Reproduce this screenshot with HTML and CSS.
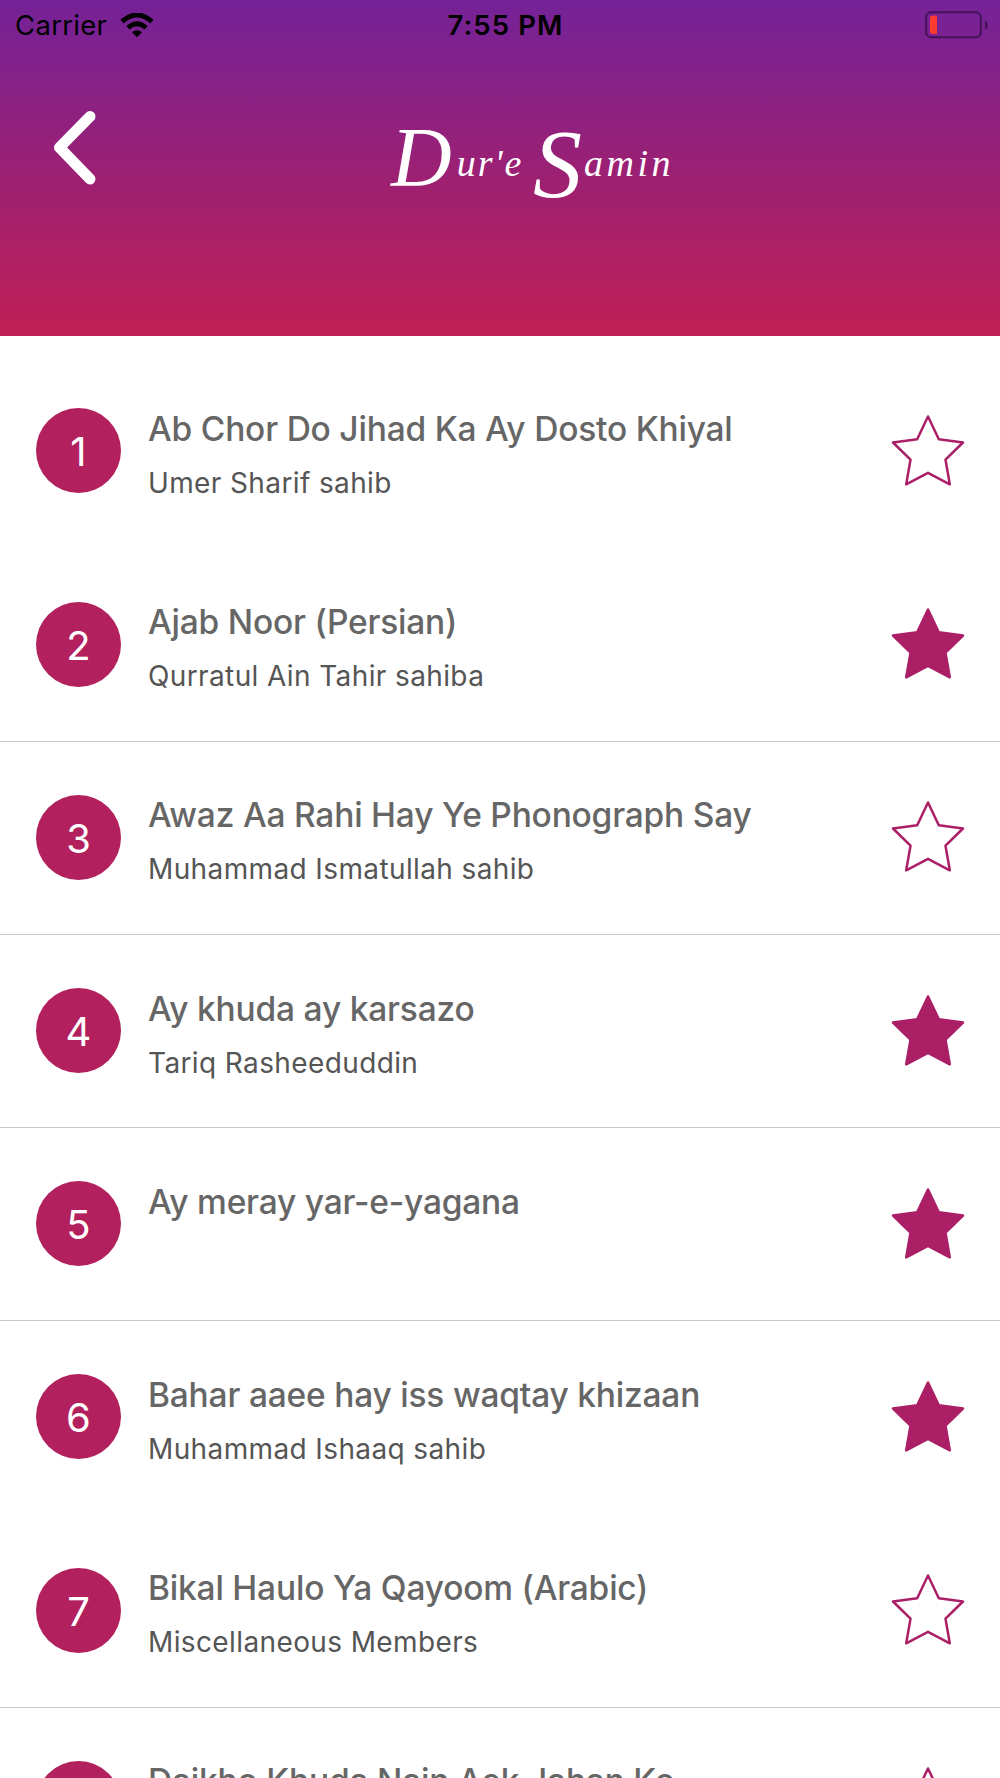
FILE: index.html
```html
<!DOCTYPE html>
<html lang="en">
<head>
    <meta charset="UTF-8">
    <meta name="viewport" content="width=device-width, initial-scale=1.0">
    <title>Dur'e Samin</title>
    <link rel="stylesheet" href="styles.css">
</head>
<body>
    <svg class="symbols" width="0" height="0">
        <symbol id="star" viewBox="0 0 72 70" overflow="visible">
            <path d="M36 1.5 L46.8 24.2 L71 27.5 L53.5 44.7 L57.8 69.3 L36 57.8 L14.2 69.3 L18.5 44.7 L1 27.5 L25.2 24.2 Z"/>
        </symbol>
    </svg>

    <header class="header">
        <div class="status-bar">
            <div class="status-left">
                <span class="carrier">Carrier</span>
                <svg class="wifi" width="34" height="25" viewBox="0 0 34 25">
                    <path d="M2 8.5 Q17 -4.5 32 8.5" stroke-width="5"/>
                    <path d="M7.9 14.8 Q17 6.7 26.1 14.8" stroke-width="4.8"/>
                    <path class="wifi-dot" d="M12 19.2 Q17 15.2 22 19.2 L17 24.2 Z"/>
                </svg>
            </div>
            <span class="time">7:55 PM</span>
            <svg class="battery" width="63" height="28" viewBox="0 0 63 28">
                <rect class="battery-body" x="1.2" y="1.2" width="54.6" height="25" rx="5"/>
                <path class="battery-tip" d="M60 9 Q63 11 63 14 Q63 17 60 19 Z"/>
                <path class="battery-level" d="M8 4.5 H12 V23 H8 Q5 23 5 20 V7.5 Q5 4.5 8 4.5 Z"/>
            </svg>
        </div>
        <div class="nav-bar">
            <svg class="back" width="44" height="76" viewBox="0 0 44 76">
                <path d="M37 6.5 L6.5 37.5 L37 69"/>
            </svg>
            <h1 class="title"><span class="initial-d">D</span><span class="first">ur'e</span> <span class="initial-s">S</span><span class="last">amin</span></h1>
        </div>
    </header>

    <main class="list">
        <div class="row no-line">
            <div class="number">1</div>
            <div class="info">
                <h2>Ab Chor Do Jihad Ka Ay Dosto Khiyal</h2>
                <p>Umer Sharif sahib</p>
            </div>
            <svg class="star"><use href="#star"/></svg>
        </div>
        <div class="row">
            <div class="number">2</div>
            <div class="info">
                <h2>Ajab Noor (Persian)</h2>
                <p>Qurratul Ain Tahir sahiba</p>
            </div>
            <svg class="star filled"><use href="#star"/></svg>
        </div>
        <div class="row">
            <div class="number">3</div>
            <div class="info">
                <h2>Awaz Aa Rahi Hay Ye Phonograph Say</h2>
                <p>Muhammad Ismatullah sahib</p>
            </div>
            <svg class="star"><use href="#star"/></svg>
        </div>
        <div class="row">
            <div class="number">4</div>
            <div class="info">
                <h2>Ay khuda ay karsazo</h2>
                <p>Tariq Rasheeduddin</p>
            </div>
            <svg class="star filled"><use href="#star"/></svg>
        </div>
        <div class="row">
            <div class="number">5</div>
            <div class="info">
                <h2>Ay meray yar-e-yagana</h2>
                <p></p>
            </div>
            <svg class="star filled"><use href="#star"/></svg>
        </div>
        <div class="row no-line">
            <div class="number">6</div>
            <div class="info">
                <h2>Bahar aaee hay iss waqtay khizaan</h2>
                <p>Muhammad Ishaaq sahib</p>
            </div>
            <svg class="star filled"><use href="#star"/></svg>
        </div>
        <div class="row">
            <div class="number">7</div>
            <div class="info">
                <h2>Bikal Haulo Ya Qayoom (Arabic)</h2>
                <p>Miscellaneous Members</p>
            </div>
            <svg class="star"><use href="#star"/></svg>
        </div>
        <div class="row">
            <div class="number">8</div>
            <div class="info">
                <h2>Daikho Khuda Nain Aek Jahan Ko</h2>
                <p></p>
            </div>
            <svg class="star"><use href="#star"/></svg>
        </div>
    </main>
</body>
</html>
```
FILE: styles.css
```css
* {
    margin: 0;
    padding: 0;
    box-sizing: border-box;
}

body {
    font-family: Inter, 'Liberation Sans', sans-serif;
    background: #fff;
    height: 1778px;
    overflow: hidden;
}

.symbols {
    display: block;
}

.header {
    height: 336px;
    background: linear-gradient(180deg, #742298 0%, #a2206d 60%, #bd2059 95%, #c02052 100%);
}

/* Status bar */
.status-bar {
    display: grid;
    grid-template-columns: 1fr auto 1fr;
    align-items: center;
    height: 50px;
    padding: 0 12px 0 15px;
    color: #000;
}

.status-left {
    display: flex;
    align-items: center;
    gap: 13px;
}

.carrier {
    font-size: 27.5px;
    letter-spacing: 0.3px;
}

.wifi {
    fill: none;
    stroke: #000;
}

.wifi-dot {
    fill: #000;
    stroke: none;
}

.time {
    padding-left: 8px;
    font-size: 27.5px;
    font-weight: 600;
    letter-spacing: 1.1px;
}

.battery {
    justify-self: end;
}

.battery-body {
    fill: none;
    stroke: #45125a;
    stroke-width: 2;
}

.battery-tip {
    fill: #45125a;
}

.battery-level {
    fill: #ff3b30;
}

/* Navigation */
.nav-bar {
    display: flex;
    align-items: flex-start;
    padding: 60px 0 0 53px;
}

.back path {
    fill: none;
    stroke: #fff;
    stroke-width: 11;
    stroke-linecap: round;
    stroke-linejoin: round;
}

.title {
    height: 110px;
    margin-left: 294px;
    color: #fff;
    font-family: 'Liberation Serif', serif;
    font-style: italic;
    font-weight: 400;
    font-size: 38px;
    line-height: 106px;
    white-space: nowrap;
}

.title span {
    line-height: 1;
}

.initial-d {
    font-size: 84px;
    letter-spacing: 5px;
    vertical-align: -10px;
}

.initial-s {
    font-size: 98px;
    letter-spacing: 2px;
    vertical-align: -21px;
}

.first {
    letter-spacing: 2px;
}

.last {
    letter-spacing: 3.5px;
}

/* List */
.list {
    padding-top: 19.4px;
}

.row {
    display: flex;
    align-items: center;
    height: 193.2px;
    padding: 0 36px;
    border-bottom: 1px solid #c8c8c8;
}

.row.no-line {
    border-bottom-color: transparent;
}

.number {
    width: 85px;
    height: 85px;
    margin-bottom: 1px;
    border-radius: 50%;
    background: #b3205e;
    color: #fff;
    font-size: 40px;
    line-height: 87px;
    text-align: center;
}

.info {
    flex: 1;
    padding: 9px 0 0 27px;
}

.info h2 {
    height: 54px;
    color: #666;
    font-size: 33.5px;
    font-weight: 500;
    letter-spacing: -0.2px;
    line-height: 50px;
    white-space: nowrap;
}

.info p {
    height: 50px;
    color: #555;
    font-size: 28px;
    letter-spacing: 0.38px;
    line-height: 50px;
    white-space: nowrap;
}

.star {
    width: 72px;
    height: 70px;
    margin: 0 0.5px 3px 0;
    overflow: visible;
    fill: none;
    stroke: #ab1f66;
    stroke-width: 2.5;
    stroke-linejoin: round;
}

.star.filled {
    fill: #ab1f66;
}
```
